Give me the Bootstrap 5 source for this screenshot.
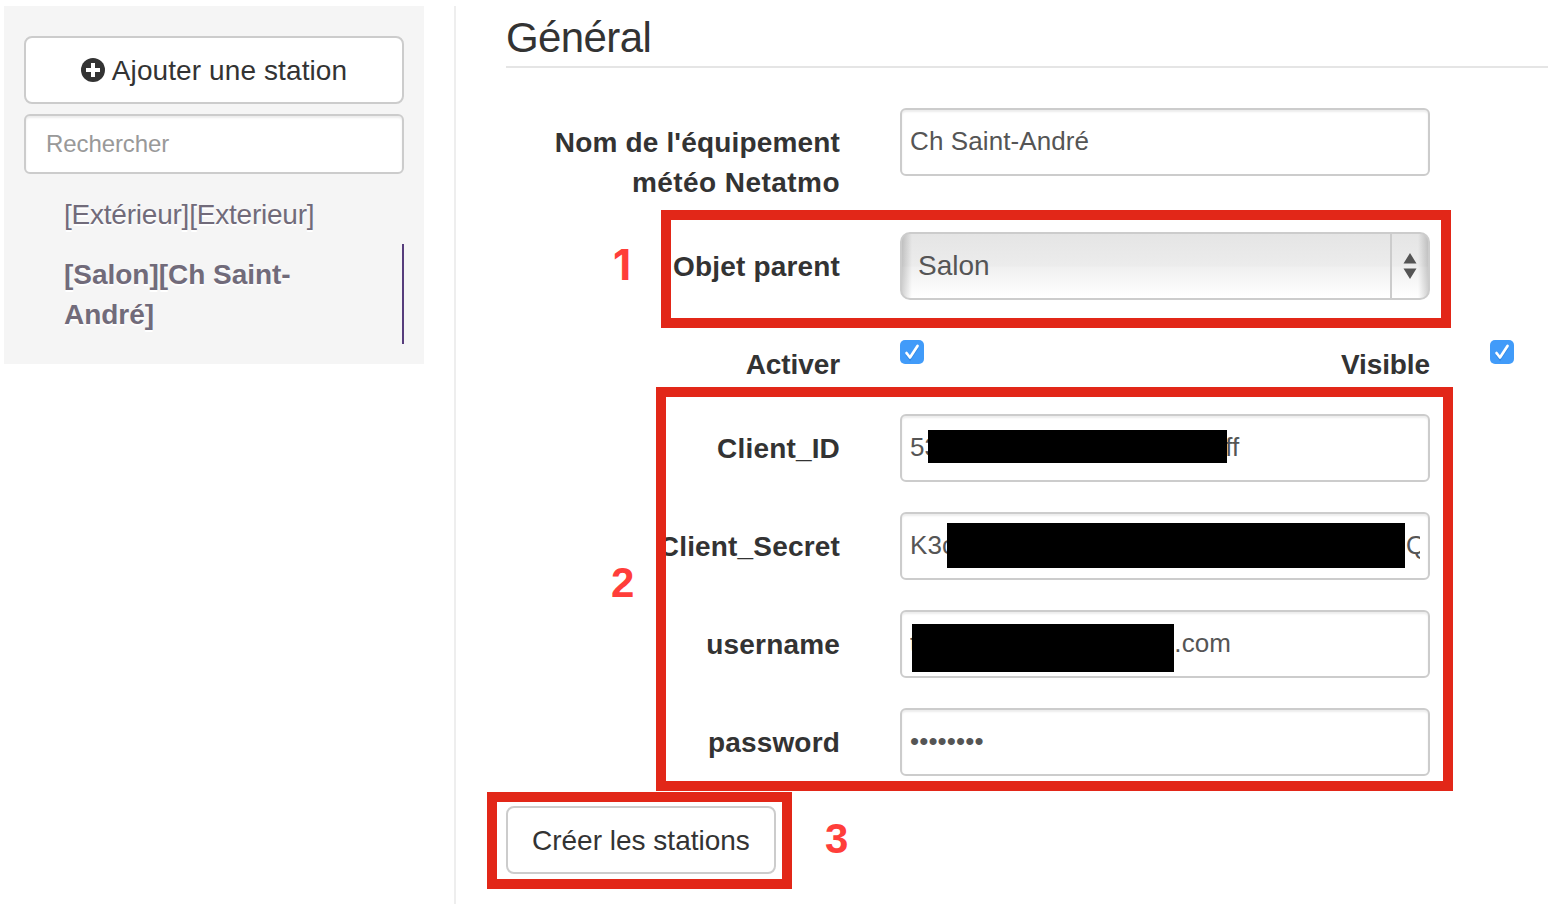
<!DOCTYPE html>
<html lang="fr">
<head>
<meta charset="utf-8">
<title>Météo Netatmo</title>
<link rel="stylesheet" href="https://cdn.jsdelivr.net/npm/bootstrap@5.3.0/dist/css/bootstrap.min.css">
<style>
body { font-family: "Liberation Sans", Arial, sans-serif; font-size: 28px; line-height: 40px; color: #333; background: #fff; height: 904px; overflow: hidden; padding-top: 6px; }
.station-panel { width: 420px; margin-left: 4px; padding: 30px 20px 20px; background: #f5f5f5; align-self: flex-start; }
.btn-plain { --bs-btn-font-size: 28px; --bs-btn-line-height: 40px; --bs-btn-color: #333; --bs-btn-bg: #fff; --bs-btn-border-color: #ccc; --bs-btn-border-width: 2px; --bs-btn-border-radius: 8px; --bs-btn-padding-x: 24px; padding-top: 13px; padding-bottom: 11px; }
.btn-plain svg { margin: -2px 7px 0 0; }
.add-station { letter-spacing: .1px; }
.form-control { height: 68px; border: 2px solid #ccc; border-radius: 6px; padding: 0 8px 2px; font-size: 26px; line-height: 62px; color: #555; background: #fff; box-shadow: inset 0 2px 2px rgba(0,0,0,.075); letter-spacing: .1px; }
.form-control.finder { height: 60px; font-size: 24px; padding: 0 20px; line-height: 56px; margin: 10px 0; letter-spacing: -.1px; }
.finder::placeholder { color: #999; }
.station-link { padding: 11px 38px 9px 40px; color: #716b7a; text-shadow: 0 2px 0 #fff; border-right: 2px solid transparent; text-decoration: none; display: block; letter-spacing: -.22px; }
.station-link.current { font-weight: 700; border-color: #563d7c; letter-spacing: -.03px; }
.settings { margin-left: 30px; padding-left: 50px; border-left: 2px solid #eee; height: 898px; }
.settings legend { font-size: 42px; line-height: 60px; height: 62px; padding-top: 2px; border-bottom: 2px solid #e5e5e5; margin-bottom: 40px; letter-spacing: -.6px; }
.field-row { display: grid; grid-template-columns: 334px 530px; column-gap: 60px; margin-bottom: 30px; align-items: start; }
.field-row.checks { grid-template-columns: 334px 24px 446px 24px; height: 54px; }
.field-label { font-weight: 700; text-align: right; padding-top: 15px; margin-bottom: -1px; letter-spacing: .17px; }
.tracked { letter-spacing: .45px; }
.checks .field-label { letter-spacing: -.1px; }
.tick { width: 24px; height: 24px; margin-top: 10px; display: block; }
.native-select { height: 68px; border: 2px solid #ccc; border-radius: 10px; color: #555; line-height: 64px; background: linear-gradient(90deg, rgba(0,0,0,.17), rgba(0,0,0,0) 10px, rgba(0,0,0,0) calc(100% - 10px), rgba(0,0,0,.17)), linear-gradient(#e5e5e5, #ececec 50%, #f0f0f0 52%, #fff); }
.native-select .stepper { width: 38px; border-left: 2px solid #ccc; }
.masked { white-space: nowrap; overflow: hidden; }
.mask { background: #000; flex: none; position: relative; }
.frame { position: absolute; border: 10px solid #e22718; pointer-events: none; }
.step-no { position: absolute; font-size: 42px; line-height: 42px; font-weight: 700; color: #ff3e3a; }
.frame-a { left: 155px; top: -22px; width: 790px; height: 118px; }
.frame-b { left: 150px; top: -27px; width: 797px; height: 404px; }
.frame-c { left: -19px; top: -14px; width: 305px; height: 97px; }
.no-a { left: 107px; top: 12px; font-family: Inter, sans-serif; }
.no-b { left: 105px; top: 148px; }
.no-c { left: 319px; top: 12px; }
.m-id { width: 299px; height: 33px; margin: -2px -2px 0 -11px; }
.m-secret { width: 458px; height: 45px; margin-left: -8px; margin-right: 1px; }
.m-user { width: 262px; height: 48px; margin-left: -5px; margin-top: 10px; }
.masked { height: 62px; }
</style>
</head>
<body>
<div class="d-flex">
  <aside class="station-panel">
    <button class="btn btn-plain add-station w-100 d-flex align-items-center justify-content-center">
      <svg width="24" height="24" viewBox="0 0 24 24"><circle cx="12" cy="12" r="12" fill="#333"/><path d="M10 5h4v5h5v4h-5v5h-4v-5H5v-4h5z" fill="#fff"/></svg>Ajouter une station
    </button>
    <input class="form-control finder" placeholder="Rechercher">
    <nav>
      <a class="station-link">[Extérieur][Exterieur]</a>
      <a class="station-link current">[Salon][Ch Saint-André]</a>
    </nav>
  </aside>
  <main class="settings flex-grow-1">
    <legend>Général</legend>
    <div class="field-row">
      <label class="field-label">Nom de l'équipement <span class="tracked">météo Netatmo</span></label>
      <input class="form-control" value="Ch Saint-André">
    </div>
    <div class="field-row position-relative">
      <label class="field-label">Objet parent</label>
      <div class="native-select d-flex justify-content-between">
        <span class="ps-3">Salon</span>
        <span class="stepper d-flex align-items-center justify-content-center"><svg width="14" height="26" viewBox="0 0 14 26"><path d="M7 0l6.500 10.500H.5zM7 26L.5 15.500h13z" fill="#555"/></svg></span>
      </div>
      <div class="frame frame-a"></div><span class="step-no no-a">1</span>
    </div>
    <div class="field-row checks">
      <label class="field-label">Activer</label>
      <svg class="tick" viewBox="0 0 24 24"><rect width="24" height="24" rx="5" fill="#419bf9"/><path d="M6.500 14.500L10 19 17.500 7.500" fill="none" stroke="#1f75cf" stroke-opacity=".5" stroke-width="2.500"/><path d="M6.500 13L10 17.500 17.500 6" fill="none" stroke="#fff" stroke-width="2.700" stroke-linecap="round" stroke-linejoin="round"/></svg>
      <label class="field-label">Visible</label>
      <svg class="tick" viewBox="0 0 24 24"><rect width="24" height="24" rx="5" fill="#419bf9"/><path d="M6.500 14.500L10 19 17.500 7.500" fill="none" stroke="#1f75cf" stroke-opacity=".5" stroke-width="2.500"/><path d="M6.500 13L10 17.500 17.500 6" fill="none" stroke="#fff" stroke-width="2.700" stroke-linecap="round" stroke-linejoin="round"/></svg>
    </div>
    <div class="position-relative">
      <div class="field-row">
        <label class="field-label">Client_ID</label>
        <div class="form-control"><div class="masked d-flex align-items-center">53<span class="mask m-id"></span>ff</div></div>
      </div>
      <div class="field-row">
        <label class="field-label">Client_Secret</label>
        <div class="form-control"><div class="masked d-flex align-items-center">K3c<span class="mask m-secret"></span>Q</div></div>
      </div>
      <div class="field-row">
        <label class="field-label">username</label>
        <div class="form-control"><div class="masked d-flex align-items-center">t<span class="mask m-user"></span>.com</div></div>
      </div>
      <div class="field-row">
        <label class="field-label">password</label>
        <input class="form-control" type="password" value="12345678">
      </div>
      <div class="frame frame-b"></div><span class="step-no no-b">2</span>
    </div>
    <div class="position-relative">
      <button class="btn btn-plain d-block">Créer les stations</button>
      <div class="frame frame-c"></div><span class="step-no no-c">3</span>
    </div>
  </main>
</div>
<script src="https://cdn.jsdelivr.net/npm/bootstrap@5.3.0/dist/js/bootstrap.bundle.min.js"></script>
</body>
</html>
